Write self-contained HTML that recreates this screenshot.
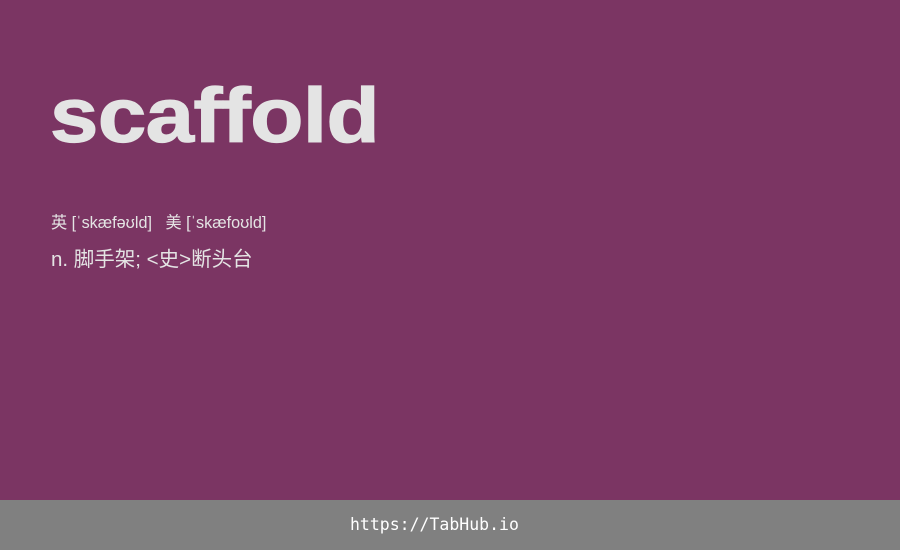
<!DOCTYPE html>
<html><head><meta charset="utf-8"><style>
html,body{margin:0;padding:0;}
body{width:900px;height:550px;background:#7b3563;position:relative;overflow:hidden;font-family:"Liberation Sans","Noto Sans CJK SC",sans-serif;color:#e4e4e4;}
.t{position:absolute;left:50px;top:73px;font-size:77px;font-weight:bold;line-height:86px;color:#e4e4e4;transform:scaleX(1.13);transform-origin:0 0;-webkit-text-stroke:1.2px #e4e4e4;letter-spacing:-0.5px;}
.p{position:absolute;left:51px;top:213px;font-size:16.2px;line-height:20px;}
.d{position:absolute;left:51px;top:248px;font-size:20.5px;line-height:24px;}
.f{position:absolute;left:350px;top:500px;height:50px;color:#fff;font-family:"DejaVu Sans Mono",monospace;font-size:16.5px;line-height:50px;}
.bar{position:absolute;left:0;top:500px;width:900px;height:50px;background:#808080;}
</style></head><body>
<div class="t">scaffold</div>
<div class="p">英 [ˈskæfəʊld]&nbsp;&nbsp; 美 [ˈskæfoʊld]</div>
<div class="d">n. 脚手架; &lt;史&gt;断头台</div>
<div class="bar"></div>
<div class="f">https://TabHub.io</div>
</body></html>
